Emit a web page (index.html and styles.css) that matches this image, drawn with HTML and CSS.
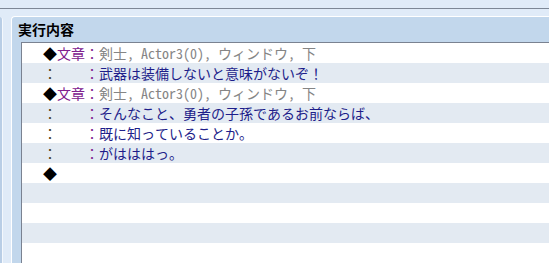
FILE: index.html
```html
<!DOCTYPE html>
<html lang="ja">
<head>
  <meta charset="UTF-8" />
  <meta name="viewport" content="width=device-width, initial-scale=1.0"/>
  <title>実行内容</title>
  <link rel="stylesheet" href="styles.css">
</head>
<body>
  <div class="topo"></div>

  <div class="area">
    <div class="painel-lado"></div>

    <div class="painel">
      <div class="titulo">実行内容</div>
      <div class="lista">
        <div class="linha"><span class="marca">◆</span><span class="cmd">文章：</span><span class="param">剣士, Actor3(0), ウィンドウ, 下</span></div>
        <div class="linha"><span class="cont">：　　</span><span class="cmd">：</span><span class="msg">武器は装備しないと意味がないぞ！</span></div>
        <div class="linha"><span class="marca">◆</span><span class="cmd">文章：</span><span class="param">剣士, Actor3(0), ウィンドウ, 下</span></div>
        <div class="linha"><span class="cont">：　　</span><span class="cmd">：</span><span class="msg">そんなこと、勇者の子孫であるお前ならば、</span></div>
        <div class="linha"><span class="cont">：　　</span><span class="cmd">：</span><span class="msg">既に知っていることか。</span></div>
        <div class="linha"><span class="cont">：　　</span><span class="cmd">：</span><span class="msg">がはははっ。</span></div>
        <div class="linha"><span class="marca">◆</span></div>
        <div class="linha"></div>
        <div class="linha"></div>
        <div class="linha"></div>
        <div class="linha"></div>
      </div>
    </div>
  </div>
</body>
</html>
```

FILE: styles.css
```css
* {
  margin: 0;
  padding: 0;
  box-sizing: border-box;
}

body {
  width: 549px;
  height: 263px;
  overflow: hidden;
  background: #e0ebf8;
  font-family: "Noto Sans Mono CJK JP", "Noto Sans CJK JP", monospace;
  font-size: 14px;
}

.topo {
  height: 9px;
  border-bottom: 1px solid #7d8796;
}

.area {
  display: flex;
  margin-top: 7px;
  height: 247px;
}

.painel-lado {
  width: 3px;
  margin-top: 1px;
  background: #b9cee6;
  border-right: 1px solid #f4f8fd;
  border-top-right-radius: 3px;
}

.painel {
  flex: 1;
  margin-left: 8px;
  background: #c2d7ec;
  border-top: 1px solid #ffffff;
  border-left: 1px solid #ffffff;
  border-top-left-radius: 4px;
  display: flex;
  flex-direction: column;
}

.titulo {
  height: 25px;
  line-height: 25px;
  padding-left: 6px;
  font-family: "Noto Sans CJK JP", sans-serif;
  font-weight: bold;
  color: #000;
}

.lista {
  flex: 1;
  margin-left: 9px;
  background: #fff;
  border-top: 1px solid #7a8291;
  border-left: 1px solid #7a8291;
}

.linha {
  height: 20px;
  line-height: 20px;
  padding-left: 21px;
  white-space: pre;
}

.linha:nth-child(even) {
  background: #e3eaf2;
}

.marca {
  color: #000;
}

.cont {
  color: #4a3a18;
}

.cmd {
  color: #80208e;
}

.param {
  color: #858585;
}

.msg {
  color: #1e1e8a;
}
```
